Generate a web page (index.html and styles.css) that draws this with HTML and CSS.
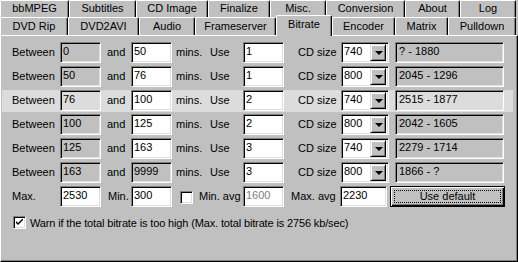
FILE: index.html
```html
<!DOCTYPE html>
<html lang="en">
<head>
    <meta charset="UTF-8">
    <title>Bitrate</title>
    <link rel="stylesheet" href="styles.css">
</head>
<body>

<!-- Tab strip (two rows) -->
<div class="tabs">
    <div class="tab-row back">
        <div class="tab t-bbmpeg">bbMPEG</div>
        <div class="tab t-subtitles">Subtitles</div>
        <div class="tab t-cdimage">CD Image</div>
        <div class="tab t-finalize">Finalize</div>
        <div class="tab t-misc">Misc.</div>
        <div class="tab t-conversion">Conversion</div>
        <div class="tab t-about">About</div>
        <div class="tab t-log">Log</div>
    </div>
    <div class="tab-row front">
        <div class="tab t-dvdrip">DVD Rip</div>
        <div class="tab t-dvd2avi">DVD2AVI</div>
        <div class="tab t-audio">Audio</div>
        <div class="tab t-frameserver">Frameserver</div>
        <div class="tab t-bitrate active">Bitrate</div>
        <div class="tab t-encoder">Encoder</div>
        <div class="tab t-matrix">Matrix</div>
        <div class="tab t-pulldown">Pulldown</div>
    </div>
</div>

<!-- Bitrate page -->
<div class="panel">

    <div class="row">
        <span class="lbl lbl-between">Between</span>
        <input class="edit off" value="0" readonly>
        <span class="lbl lbl-and">and</span>
        <input class="edit" value="50">
        <span class="lbl lbl-mins">mins.</span>
        <span class="lbl lbl-use">Use</span>
        <input class="edit" value="1">
        <span class="lbl lbl-cd">CD size</span>
        <div class="combo"><span class="combo-val">740</span><span class="combo-btn"><i class="arrow"></i></span></div>
        <div class="result">? - 1880</div>
    </div>

    <div class="row">
        <span class="lbl lbl-between">Between</span>
        <input class="edit off" value="50" readonly>
        <span class="lbl lbl-and">and</span>
        <input class="edit" value="76">
        <span class="lbl lbl-mins">mins.</span>
        <span class="lbl lbl-use">Use</span>
        <input class="edit" value="1">
        <span class="lbl lbl-cd">CD size</span>
        <div class="combo"><span class="combo-val">800</span><span class="combo-btn"><i class="arrow"></i></span></div>
        <div class="result">2045 - 1296</div>
    </div>

    <div class="row hi">
        <span class="lbl lbl-between">Between</span>
        <input class="edit off" value="76" readonly>
        <span class="lbl lbl-and">and</span>
        <input class="edit" value="100">
        <span class="lbl lbl-mins">mins.</span>
        <span class="lbl lbl-use">Use</span>
        <input class="edit" value="2">
        <span class="lbl lbl-cd">CD size</span>
        <div class="combo"><span class="combo-val">740</span><span class="combo-btn"><i class="arrow"></i></span></div>
        <div class="result">2515 - 1877</div>
    </div>

    <div class="row">
        <span class="lbl lbl-between">Between</span>
        <input class="edit off" value="100" readonly>
        <span class="lbl lbl-and">and</span>
        <input class="edit" value="125">
        <span class="lbl lbl-mins">mins.</span>
        <span class="lbl lbl-use">Use</span>
        <input class="edit" value="2">
        <span class="lbl lbl-cd">CD size</span>
        <div class="combo"><span class="combo-val">800</span><span class="combo-btn"><i class="arrow"></i></span></div>
        <div class="result">2042 - 1605</div>
    </div>

    <div class="row">
        <span class="lbl lbl-between">Between</span>
        <input class="edit off" value="125" readonly>
        <span class="lbl lbl-and">and</span>
        <input class="edit" value="163">
        <span class="lbl lbl-mins">mins.</span>
        <span class="lbl lbl-use">Use</span>
        <input class="edit" value="3">
        <span class="lbl lbl-cd">CD size</span>
        <div class="combo"><span class="combo-val">740</span><span class="combo-btn"><i class="arrow"></i></span></div>
        <div class="result">2279 - 1714</div>
    </div>

    <div class="row">
        <span class="lbl lbl-between">Between</span>
        <input class="edit off" value="163" readonly>
        <span class="lbl lbl-and">and</span>
        <input class="edit off" value="9999" readonly>
        <span class="lbl lbl-mins">mins.</span>
        <span class="lbl lbl-use">Use</span>
        <input class="edit" value="3">
        <span class="lbl lbl-cd">CD size</span>
        <div class="combo"><span class="combo-val">800</span><span class="combo-btn"><i class="arrow"></i></span></div>
        <div class="result">1866 - ?</div>
    </div>

    <!-- Limits -->
    <div class="row">
        <span class="lbl lbl-between">Max.</span>
        <input class="edit" value="2530">
        <span class="lbl lbl-min">Min.</span>
        <input class="edit" value="300">
        <span class="check small-check"></span>
        <span class="lbl lbl-minavg">Min. avg</span>
        <input class="edit grey-text" value="1600" readonly>
        <span class="lbl lbl-maxavg">Max. avg</span>
        <input class="edit edit-wide" value="2230">
        <button class="btn-default"><span class="focus">Use default</span></button>
    </div>

    <div class="warn-row">
        <span class="check">
            <svg width="7" height="7" viewBox="0 0 7 7"><path d="M0 2 L0 4 L2 6 L7 1 L7 -1 L2 4 Z" fill="#000"/></svg>
        </span>
        <span class="warn-text">Warn if the total bitrate is too high (Max. total bitrate is 2756 kb/sec)</span>
    </div>

</div>

</body>
</html>
```

FILE: styles.css
```css
/* Basic Reset */
* {
    margin: 0;
    padding: 0;
    box-sizing: border-box;
}

body {
    font-family: 'Liberation Sans', Arial, sans-serif;
    font-size: 11px;
    color: #000;
    background-color: #c0c0c0;
    width: 518px;
    height: 262px;
    overflow: hidden;
}

/* Tabs */
.tab-row {
    display: flex;
    height: 17px;
}

.tab-row.front {
    height: 18px;
}

.tab {
    flex: none;
    background-color: #c0c0c0;
    border-top: 1px solid #fff;
    border-left: 1px solid #fff;
    border-right: 1px solid #000;
    border-radius: 2px 2px 0 0;
    box-shadow: inset -1px 0 #808080;
    text-align: center;
    line-height: 15px;
    white-space: nowrap;
}

.front .tab {
    line-height: 16px;
}

.tab.active {
    position: relative;
    z-index: 2;
    margin-top: -2px;
    height: 21px;
    line-height: 16px;
}

.t-bbmpeg { width: 69px; }
.t-subtitles { width: 67px; }
.t-cdimage { width: 72px; }
.t-finalize { width: 62px; }
.t-misc { width: 56px; }
.t-conversion { width: 79px; }
.t-about { width: 55px; }
.t-log { width: 56px; }

.t-dvdrip { width: 68px; }
.t-dvd2avi { width: 71px; }
.t-audio { width: 56px; }
.t-frameserver { width: 81px; }
.t-bitrate { width: 56px; }
.t-encoder { width: 63px; }
.t-matrix { width: 53px; }
.t-pulldown { width: 68px; }

/* Page panel */
.panel {
    position: relative;
    width: 518px;
    height: 227px;
    border-top: 1px solid #fff;
    border-left: 1px solid #fff;
    border-right: 1px solid #000;
    border-bottom: 1px solid #000;
    box-shadow: inset -1px -1px #808080;
    padding: 6px 0 0 1px;
}

.row {
    display: flex;
    align-items: flex-start;
    width: 511px;
    height: 22px;
    margin-bottom: 2px;
    padding-left: 10px;
}

.row.hi {
    background-color: #dcdcdc;
}

.lbl {
    flex: none;
    line-height: 20px;
    white-space: nowrap;
}

.lbl-between { width: 48px; }
.lbl-and { width: 30px; padding-left: 6px; }
.lbl-min { width: 30px; padding-left: 7px; }
.lbl-mins { width: 38px; padding-left: 4px; }
.lbl-use { width: 33px; }
.lbl-cd { width: 57px; padding-left: 14px; }
.lbl-minavg { width: 44px; margin-left: 6px; }
.lbl-maxavg { width: 56px; padding-left: 7px; }

/* Sunken edit boxes */
.edit {
    flex: none;
    width: 41px;
    height: 21px;
    padding: 0 2px 3px;
    font: inherit;
    color: #000;
    background-color: #fff;
    border: 1px solid;
    border-color: #808080 #fff #fff #808080;
    box-shadow: inset 1px 1px #000, inset -1px -1px #dfdfdf;
    outline: none;
}

.edit.off {
    background-color: transparent;
}

.edit.grey-text {
    color: #808080;
}

.edit-wide {
    width: 47px;
}

/* Combo box */
.combo {
    flex: none;
    display: flex;
    justify-content: space-between;
    width: 48px;
    height: 21px;
    padding: 2px;
    background-color: #fff;
    border: 1px solid;
    border-color: #808080 #fff #fff #808080;
    box-shadow: inset 1px 1px #000, inset -1px -1px #dfdfdf;
}

.combo-val {
    line-height: 13px;
}

.combo-btn {
    display: flex;
    align-items: center;
    justify-content: center;
    width: 16px;
    height: 17px;
    margin-top: -1px;
    background-color: #c0c0c0;
    border: 1px solid;
    border-color: #dfdfdf #000 #000 #dfdfdf;
    box-shadow: inset 1px 1px #fff, inset -1px -1px #808080;
}

.arrow {
    width: 0;
    height: 0;
    border-left: 4px solid transparent;
    border-right: 4px solid transparent;
    border-top: 4px solid #000;
    margin-left: 1px;
}

.result {
    flex: none;
    width: 109px;
    height: 21px;
    margin-left: 6px;
    padding: 1px 3px;
    line-height: 14px;
    border: 1px solid;
    border-color: #808080 #fff #fff #808080;
    box-shadow: inset 1px 1px #000, inset -1px -1px #dfdfdf;
    white-space: nowrap;
}

/* Checkboxes */
.check {
    flex: none;
    display: flex;
    align-items: center;
    justify-content: center;
    width: 13px;
    height: 13px;
    background-color: #fff;
    border: 1px solid;
    border-color: #808080 #fff #fff #808080;
    box-shadow: inset 1px 1px #000, inset -1px -1px #dfdfdf;
}

.small-check {
    margin: 5px 0 0 8px;
}

/* Default push button */
.btn-default {
    flex: none;
    width: 115px;
    height: 21px;
    margin-left: 3px;
    padding: 3px;
    font: inherit;
    color: #000;
    background-color: #c0c0c0;
    border: 1px solid #000;
    box-shadow: inset 1px 1px #fff, inset -1px -1px #000, inset -2px -2px #808080;
}

.focus {
    display: block;
    height: 13px;
    line-height: 11px;
    border: 1px dotted #000;
}

/* Warning row */
.warn-row {
    display: flex;
    align-items: center;
    margin-top: 8px;
    padding-left: 11px;
}

.warn-text {
    margin-left: 4px;
    white-space: nowrap;
    letter-spacing: -0.14px;
}
```
